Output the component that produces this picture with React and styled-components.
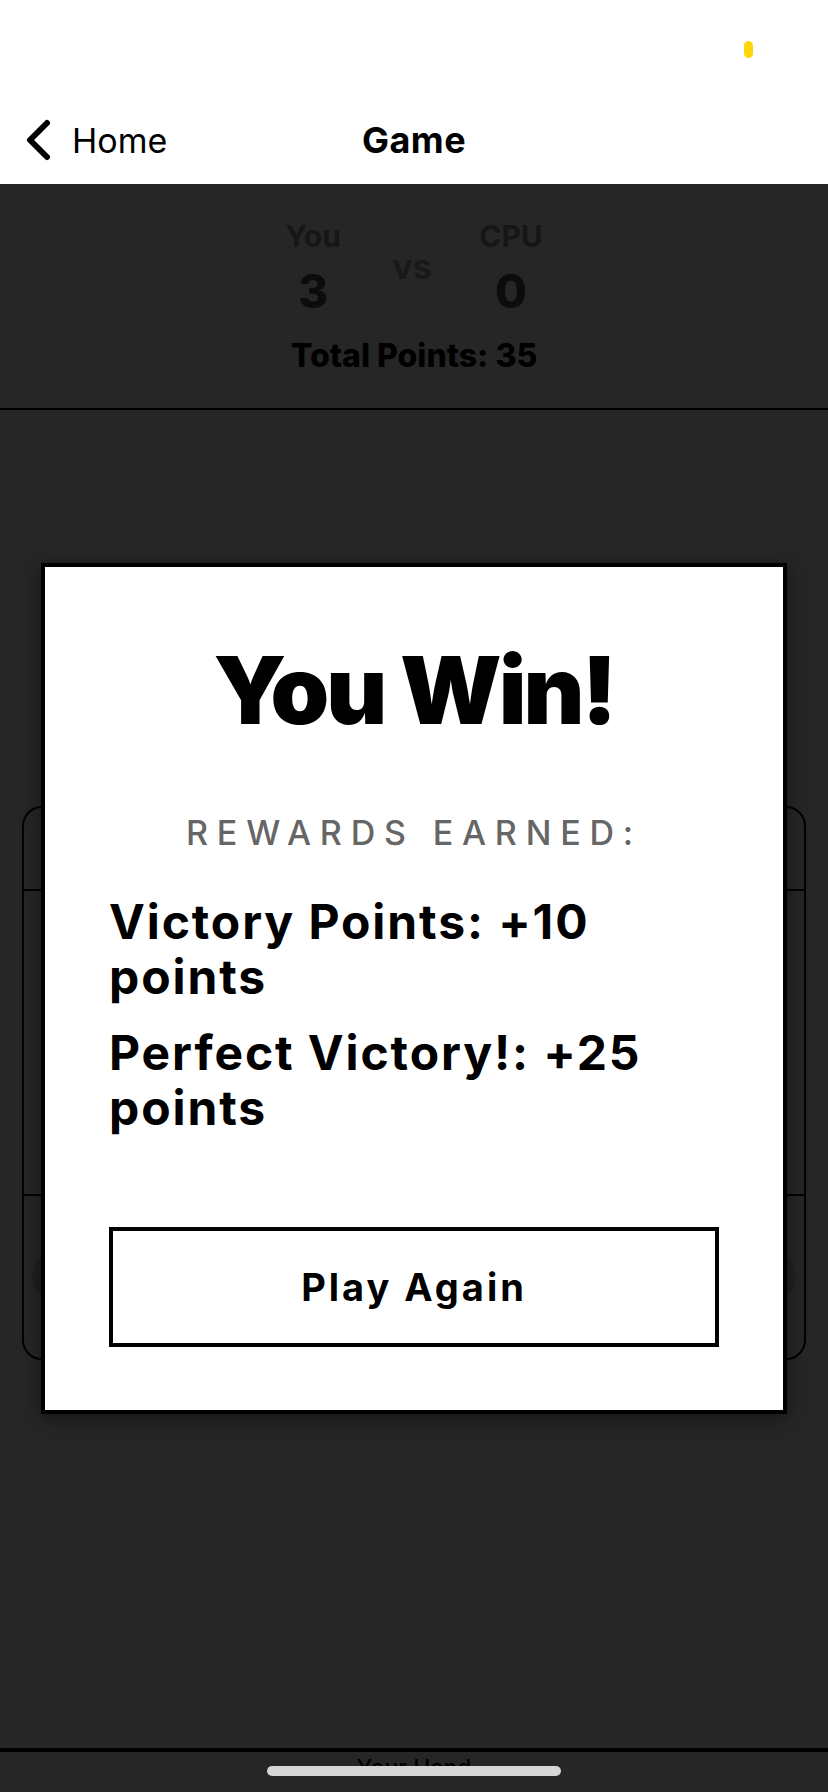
import React from "react";
import styled, { createGlobalStyle } from "styled-components";

const GlobalStyle = createGlobalStyle`
  html, body {
    margin: 0;
    padding: 0;
    background: #ffffff;
  }
  body {
    font-family: "Inter", "Liberation Sans", "Noto Sans", sans-serif;
    color: #000;
  }
`;

const Screen = styled.div`
  position: relative;
  width: 828px;
  height: 1792px;
  overflow: hidden;
  display: flex;
  flex-direction: column;
  background: #ffffff;
`;

const StatusBar = styled.div`
  height: 88px;
  display: flex;
  justify-content: flex-end;
  align-items: flex-start;
  padding: 41px 75px 0 0;
  box-sizing: border-box;
`;

const RecordingDot = styled.span`
  width: 9px;
  height: 17px;
  border-radius: 5px;
  background: #ffd60a;
`;

const NavBar = styled.header`
  height: 96px;
  display: grid;
  grid-template-columns: 1fr auto 1fr;
  align-items: center;
  padding: 8px 25px 0;
  box-sizing: border-box;
`;

const BackButton = styled.button`
  display: flex;
  align-items: center;
  gap: 19px;
  border: none;
  background: none;
  padding: 0;
  font-family: inherit;
  font-size: 34px;
  font-weight: 400;
  color: #000;
  justify-self: start;
`;

const NavTitle = styled.h1`
  margin: 0;
  font-size: 36px;
  font-weight: 700;
  letter-spacing: 0.5px;
`;

const Content = styled.main`
  position: relative;
  flex: 1;
  display: flex;
  flex-direction: column;
  background: #ffffff;
`;

const ScoreBoard = styled.section`
  padding: 34px 0 34px;
  border-bottom: 2px solid #000;
  display: flex;
  flex-direction: column;
  align-items: center;
`;

const ScoreRow = styled.div`
  display: flex;
  align-items: center;
  gap: 39px;
  padding-right: 4px;
`;

const Player = styled.div`
  width: 80px;
  display: flex;
  flex-direction: column;
  align-items: center;
  gap: 12px;
`;

const PlayerName = styled.span`
  font-size: 30px;
  line-height: 36px;
  font-weight: 700;
  color: #949494;
`;

const PlayerScore = styled.span`
  font-size: 46px;
  line-height: 50px;
  font-weight: 800;
  color: #555;
`;

const Versus = styled.span`
  width: 40px;
  text-align: center;
  font-size: 34px;
  font-weight: 700;
  color: #a8a8a8;
  margin-top: -2px;
`;

const TotalPoints = styled.div`
  margin-top: 22px;
  font-size: 32px;
  line-height: 36px;
  font-weight: 800;
  color: #000;
`;

const Arena = styled.section`
  flex: 1;
  display: flex;
  flex-direction: column;
  justify-content: center;
  padding: 8px 22px 0;
`;

const BoardCard = styled.div`
  height: 554px;
  border: 2px solid #000;
  border-radius: 20px;
  box-sizing: border-box;
  display: flex;
  flex-direction: column;
`;

const BoardSection = styled.div`
  height: ${(p) => p.$h}px;
  border-bottom: ${(p) => (p.$last ? "none" : "2px solid #000")};
  box-sizing: border-box;
  display: flex;
  align-items: center;
  justify-content: space-between;
  padding: 0 8px;
`;

const RoundButton = styled.span`
  width: 60px;
  height: 50px;
  border-radius: 25px;
  background: ${(p) => p.$tint};
`;

const HandBar = styled.footer`
  height: 38px;
  border-top: 4px solid #000;
  display: flex;
  justify-content: center;
  font-size: 23px;
  font-weight: 500;
  line-height: 28px;
  padding-top: 2px;
`;

const Overlay = styled.div`
  position: absolute;
  inset: 0;
  background: rgba(0, 0, 0, 0.851);
  display: flex;
  align-items: center;
  justify-content: center;
`;

const Modal = styled.div`
  width: 746px;
  box-sizing: border-box;
  background: #fff;
  border: 4px solid #000;
  padding: 64px 64px 63px;
  box-shadow: 0 4px 18px rgba(0, 0, 0, 0.45);
  display: flex;
  flex-direction: column;
`;

const WinTitle = styled.h2`
  margin: 12px 0 0;
  font-size: 94px;
  line-height: 94px;
  font-weight: 900;
  letter-spacing: -3px;
  text-align: center;
`;

const RewardsLabel = styled.div`
  margin-top: 76px;
  font-size: 34px;
  line-height: 40px;
  font-weight: 500;
  letter-spacing: 8.8px;
  color: #666;
  text-align: center;
`;

const RewardList = styled.ul`
  list-style: none;
  margin: 41px 0 0;
  padding: 0;
  display: flex;
  flex-direction: column;
  gap: 21px;
`;

const RewardItem = styled.li`
  font-size: 48px;
  line-height: 55px;
  font-weight: 700;
  letter-spacing: 1.9px;
`;

const PlayAgain = styled.button`
  margin-top: 92px;
  height: 120px;
  background: #fff;
  border: 4px solid #000;
  font-family: inherit;
  font-size: 38px;
  font-weight: 700;
  letter-spacing: 3px;
  color: #000;
`;

const HomeIndicator = styled.span`
  position: absolute;
  left: 267px;
  bottom: 16px;
  width: 294px;
  height: 10px;
  border-radius: 5px;
  background: #d6d6d6;
`;

const rewards = [
  "Victory Points: +10 points",
  "Perfect Victory!: +25 points",
];

export default function App() {
  return (
    <>
      <GlobalStyle />
      <Screen>
        <StatusBar>
          <RecordingDot />
        </StatusBar>
        <NavBar>
          <BackButton>
            <svg width="28" height="42" viewBox="0 0 28 42">
              <path
                d="M22 4 L5 21 L22 38"
                fill="none"
                stroke="#000"
                strokeWidth="6"
                strokeLinecap="round"
                strokeLinejoin="round"
              />
            </svg>
            Home
          </BackButton>
          <NavTitle>Game</NavTitle>
        </NavBar>
        <Content>
          <ScoreBoard>
            <ScoreRow>
              <Player>
                <PlayerName>You</PlayerName>
                <PlayerScore>3</PlayerScore>
              </Player>
              <Versus>vs</Versus>
              <Player>
                <PlayerName>CPU</PlayerName>
                <PlayerScore>0</PlayerScore>
              </Player>
            </ScoreRow>
            <TotalPoints>Total Points: 35</TotalPoints>
          </ScoreBoard>
          <Arena>
            <BoardCard>
              <BoardSection $h={83} />
              <BoardSection $h={305} />
              <BoardSection $h={162} $last>
                <RoundButton $tint="#c4dccb" />
                <RoundButton $tint="#f2d6d8" />
              </BoardSection>
            </BoardCard>
          </Arena>
          <HandBar>Your Hand</HandBar>
          <Overlay>
            <Modal>
              <WinTitle>You Win!</WinTitle>
              <RewardsLabel>REWARDS EARNED:</RewardsLabel>
              <RewardList>
                {rewards.map((r) => (
                  <RewardItem key={r}>{r}</RewardItem>
                ))}
              </RewardList>
              <PlayAgain>Play Again</PlayAgain>
            </Modal>
          </Overlay>
        </Content>
        <HomeIndicator />
      </Screen>
    </>
  );
}
